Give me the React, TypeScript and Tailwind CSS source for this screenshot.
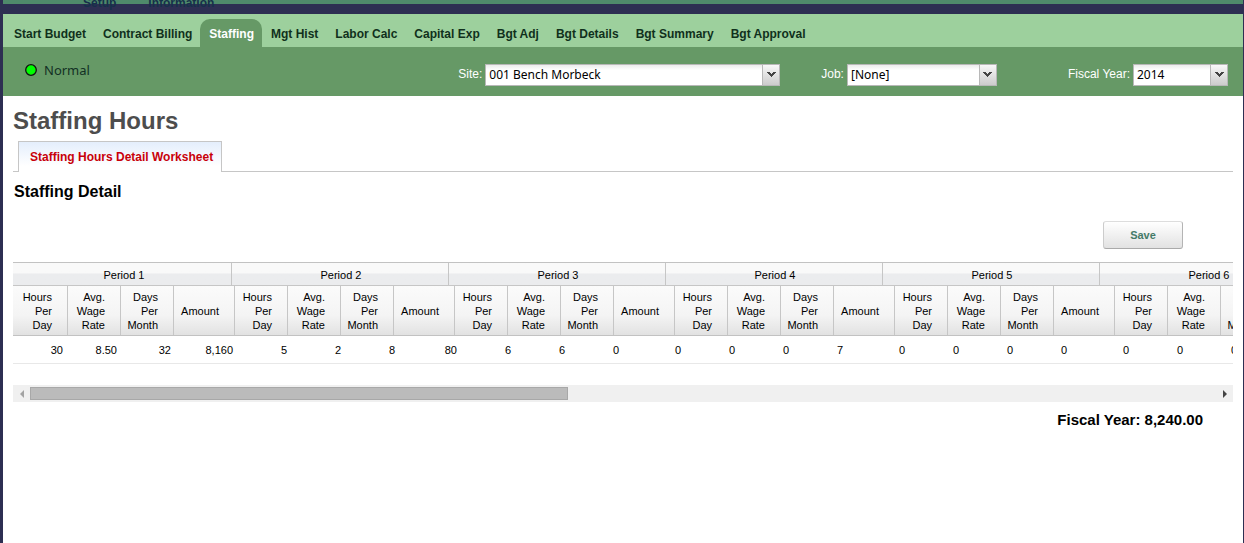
import { useRef, useState } from "react";

const tabs = [
  "Start Budget",
  "Contract Billing",
  "Staffing",
  "Mgt Hist",
  "Labor Calc",
  "Capital Exp",
  "Bgt Adj",
  "Bgt Details",
  "Bgt Summary",
  "Bgt Approval",
];

const periods = Array.from({ length: 12 }, (_, i) => i + 1);

const filled = [
  ["30", "8.50", "32", "8,160"],
  ["5", "2", "8", "80"],
  ["6", "6", "0", "0"],
  ["0", "0", "7", "0"],
];

const valuesFor = (period: number) => filled[period - 1] ?? ["0", "0", "0", "0"];

const headings = [
  ["Hours", "Per", "Day"],
  ["Avg.", "Wage", "Rate"],
  ["Days", "Per", "Month"],
];

function Dropdown({ id, label, value, width }: { id: string; label: string; value: string; width: string }) {
  return (
    <div className="flex items-start gap-[3px]">
      <label htmlFor={id} className="pt-0.5 text-xs leading-4 text-white">
        {label}
      </label>
      <div className={`relative h-[22px] ${width}`}>
        <select
          id={id}
          className="block h-[22px] w-full appearance-none rounded-none border border-[#b8b8b8] bg-linear-to-b from-[#ececec] via-white via-25% to-white pr-5 pl-[3px] font-['Noto_Sans',sans-serif] text-xs text-black outline-none"
        >
          <option>{value}</option>
        </select>
        <span className="pointer-events-none absolute top-px right-px bottom-px flex w-[17px] items-center justify-center border-l border-[#b8b8b8] bg-linear-to-b from-[#f8f8f8] to-[#cccccc] pb-0.5">
          <svg width="9" height="5" viewBox="0 0 9 5" fill="#444444" shapeRendering="crispEdges">
            <path d="M0 0h3v1h1v1h1V1h1V0h3v1H8v1H7v1H6v1H5v1H4V4H3V3H2V2H1V1H0z" />
          </svg>
        </span>
      </div>
    </div>
  );
}

export default function App() {
  const grid = useRef<HTMLDivElement>(null);
  const [offset, setOffset] = useState(0);

  const scroll = (by: number) => grid.current?.scrollBy({ left: by });
  const onScroll = () => {
    const el = grid.current;
    if (el) setOffset((el.scrollLeft / el.scrollWidth) * 100);
  };

  return (
    <div className="flex min-h-screen flex-col border-r border-l-[3px] border-[#2d2f52] bg-white font-['Liberation_Sans',Arial,sans-serif] text-black">
      <div className="h-3.5 overflow-hidden bg-linear-to-b from-[#4f8a6b] from-[4px] to-[#2d2f52] to-[4px]">
        <div className="-mt-1 flex gap-8 pl-20 text-xs leading-3.5 font-bold text-[#16304a]">
          <span>Setup</span>
          <span>Information</span>
        </div>
      </div>

      <nav className="flex bg-[#9dd09d] pt-[5px] pl-0.5">
        {tabs.map((tab) => (
          <a
            key={tab}
            href="#"
            aria-current={tab === "Staffing" ? "page" : undefined}
            className={
              tab === "Staffing"
                ? "rounded-t-[10px] bg-[#669966] pt-[7px] pr-2 pb-[5px] pl-[9px] text-xs leading-4 font-bold whitespace-nowrap text-white"
                : "pt-[7px] pr-2 pb-[5px] pl-[9px] text-xs leading-4 font-bold whitespace-nowrap text-[#10301c]"
            }
          >
            {tab}
          </a>
        ))}
      </nav>

      <div className="flex h-[49px] items-start bg-[#669966] pr-[15px] pl-[22px]">
        <div className="flex flex-1 items-center gap-[7px] pt-[13px] font-['Noto_Sans',sans-serif] text-[13px] leading-5 text-[#123024]">
          <svg width="12" height="12" viewBox="0 0 12 12">
            <circle cx="6" cy="6" r="5.3" fill="#00ff00" stroke="#111111" strokeWidth="1.3" />
          </svg>
          Normal
        </div>
        <div className="flex pt-[17px]">
          <Dropdown id="site" label="Site:" value="001 Bench Morbeck" width="w-[295px]" />
          <div className="pl-[41px]">
            <Dropdown id="job" label="Job:" value="[None]" width="w-[150px]" />
          </div>
          <div className="pl-[71px]">
            <Dropdown id="fiscal-year" label="Fiscal Year:" value="2014" width="w-[95px]" />
          </div>
        </div>
      </div>

      <main className="flex flex-col pr-2.5 pl-2.5">
        <h1 className="pt-2.5 text-2xl leading-[30px] font-bold text-[#4d4d4d]">Staffing Hours</h1>
        <div className="mt-[5px] flex border-b border-[#c6c6c6] pl-[5px]">
          <a
            href="#"
            className="-mb-px border border-b-0 border-[#c6c6c6] bg-linear-to-b from-[#e4eefc] to-white to-80% pt-[7px] pr-2 pb-[7px] pl-[11px] text-xs leading-4 font-bold text-[#c8000a]"
          >
            Staffing Hours Detail Worksheet
          </a>
        </div>
        <h2 className="pt-2.5 pl-px text-base leading-5 font-bold">Staffing Detail</h2>

        <div className="flex justify-end pt-[19px] pr-[50px] pb-[13px]">
          <button
            type="button"
            className="h-7 w-20 rounded-[3px] border border-t-[#dddddd] border-r-[#b4b4b4] border-b-[#aaaaaa] border-l-[#cccccc] bg-linear-to-b from-white to-[#e2e2e2] text-[11px] font-bold text-[#457a68]"
          >
            Save
          </button>
        </div>

        <div ref={grid} onScroll={onScroll} className="overflow-x-auto [scrollbar-width:none]">
          <table className="block w-max text-[11px] leading-3.5">
            <thead className="block border-y border-[#c2c2c2]">
              <tr className="flex border-b border-[#c6c6c6] bg-linear-to-b from-[#f9f9f9] from-45% to-[#ebecee] to-50% pl-0.5">
                {periods.map((period) => (
                  <th
                    key={period}
                    colSpan={4}
                    className="block w-[217px] shrink-0 border-r border-[#c6c6c6] pt-[5px] pb-[3px] pl-0.5 text-center font-normal"
                  >
                    Period {period}
                  </th>
                ))}
              </tr>
              <tr className="flex h-[49px] bg-linear-to-b from-[#fbfbfb] via-[#f4f4f4] via-60% to-[#e2e2e2] pl-0.5">
                {periods.flatMap((period) => [
                  ...headings.map((lines) => (
                    <th
                      key={`${period}-${lines[0]}`}
                      className="block w-[53px] shrink-0 border-r border-[#c6c6c6] pt-1 pr-[15px] text-right font-normal"
                    >
                      {lines.map((line) => (
                        <div key={line} className="flex justify-end">
                          {line}
                        </div>
                      ))}
                    </th>
                  )),
                  <th
                    key={`${period}-amount`}
                    className="block w-[61px] shrink-0 border-r border-[#c6c6c6] pt-[18px] pr-[15px] text-right font-normal"
                  >
                    Amount
                  </th>,
                ])}
              </tr>
            </thead>
            <tbody className="block">
              <tr className="flex border-b border-[#e8e8e8] pt-[7px] pb-1.5">
                {periods.flatMap((period) =>
                  valuesFor(period).map((value, i) => (
                    <td
                      key={`${period}-${i}`}
                      className={
                        i === 3
                          ? "block w-[62px] shrink-0 pr-1 text-right"
                          : "block w-[54px] shrink-0 pr-1 text-right"
                      }
                    >
                      {value}
                    </td>
                  )),
                )}
              </tr>
            </tbody>
          </table>
        </div>

        <div className="mt-[21px] flex h-[17px] bg-[#f0f0f0]">
          <button
            type="button"
            aria-label="Scroll left"
            onClick={() => scroll(-224)}
            className="flex w-[17px] shrink-0 items-center justify-center"
          >
            <svg width="4" height="8" viewBox="0 0 4 8" fill="#a3a3a3">
              <path d="M4 0v8L0 4z" />
            </svg>
          </button>
          <div className="min-w-0 flex-1 py-0.5">
            <div
              className="h-[13px] w-[45.4%] border border-[#a8a8a8] bg-[#bbbbbb]"
              style={{ marginLeft: `${offset}%` }}
            />
          </div>
          <button
            type="button"
            aria-label="Scroll right"
            onClick={() => scroll(224)}
            className="flex w-[17px] shrink-0 items-center justify-center"
          >
            <svg width="4" height="8" viewBox="0 0 4 8" fill="#444444">
              <path d="M0 0v8l4-4z" />
            </svg>
          </button>
        </div>

        <p className="pt-2 pr-[30px] text-right text-[15px] leading-5 font-bold">Fiscal Year: 8,240.00</p>
      </main>
    </div>
  );
}
